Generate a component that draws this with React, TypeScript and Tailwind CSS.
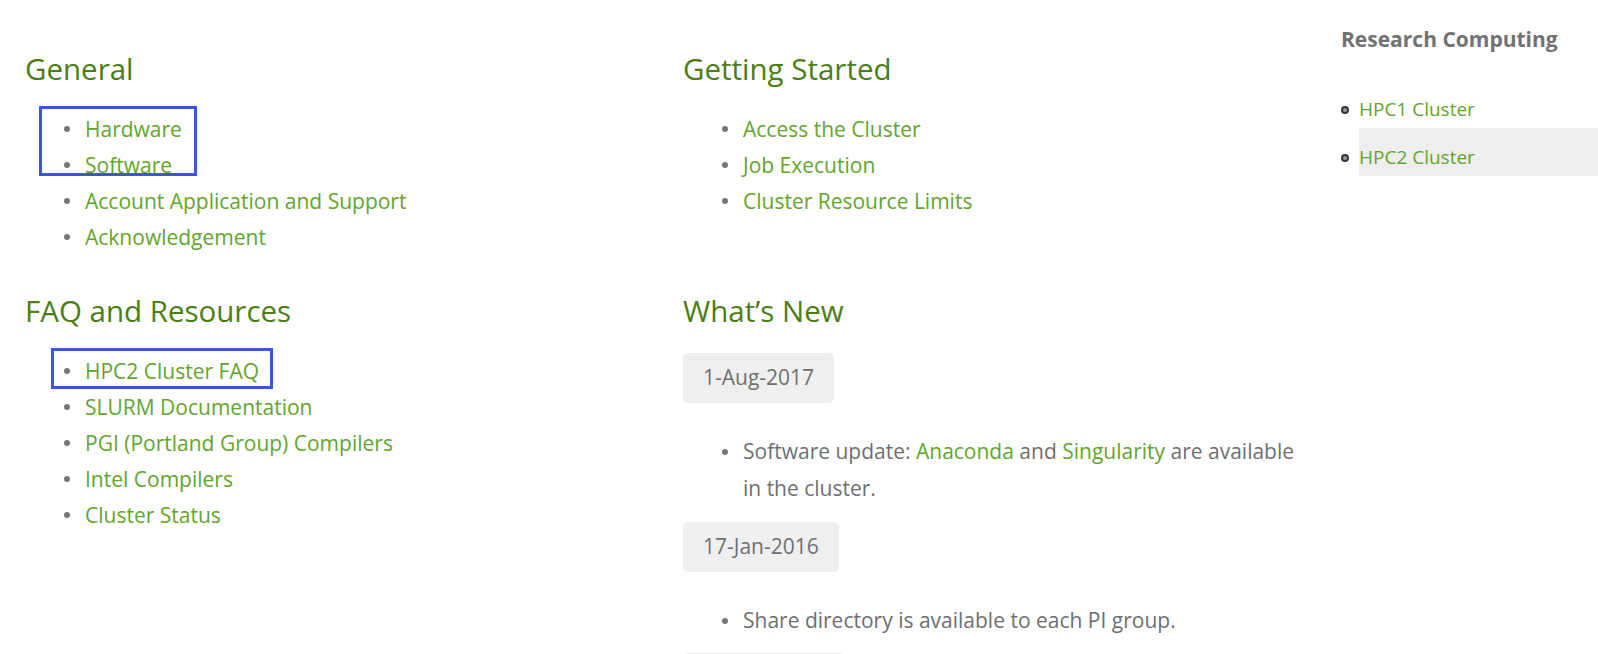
import React from 'react'

const general = ['Hardware', 'Software', 'Account Application and Support', 'Acknowledgement']
const gettingStarted = ['Access the Cluster', 'Job Execution', 'Cluster Resource Limits']
const faq = ['HPC2 Cluster FAQ', 'SLURM Documentation', 'PGI (Portland Group) Compilers', 'Intel Compilers', 'Cluster Status']

const Dot = () => <span className="block w-[6px] h-[6px] rounded-full bg-[#777] shrink-0" />

const LinkList = ({ items }: { items: string[] }) => (
    <ul className="text-[21px] leading-[36px]">
        {items.map((item) => (
            <li key={item} className="flex items-center gap-[15px] pl-[39px]">
                <Dot />
                <a className="text-[#62a52a]">{item}</a>
            </li>
        ))}
    </ul>
)

const Heading = ({ children }: { children: React.ReactNode }) => (
    <h2 className="text-[29.5px] leading-[33px] text-[#4b7d15] mb-[26px]">{children}</h2>
)

const DateBadge = ({ date }: { date: string }) => (
    <div className="inline-flex items-center h-[50px] px-[20px] rounded-[5px] bg-[#efefef] text-[21px] text-[#6f6f6f]">{date}</div>
)

export default function App() {
    return (
        <div className="relative flex bg-white min-h-screen overflow-hidden" style={{ fontFamily: '"Open Sans", "Noto Sans", sans-serif' }}>
            <main className="grid grid-cols-[658px_627px] pl-[25px] pt-[52px] shrink-0">
                <section>
                    <Heading>General</Heading>
                    <LinkList items={general} />
                </section>
                <section>
                    <Heading>Getting Started</Heading>
                    <LinkList items={gettingStarted} />
                </section>
                <section className="mt-[39px]">
                    <Heading>FAQ and Resources</Heading>
                    <LinkList items={faq} />
                </section>
                <section className="mt-[39px]">
                    <Heading>What’s New</Heading>
                    <DateBadge date="1-Aug-2017" />
                    <ul className="text-[21px] leading-[37px] text-[#6f6f6f] mt-[30px] mb-[15px]">
                        <li className="flex gap-[15px] pl-[39px]">
                            <div className="pt-[16px]"><Dot /></div>
                            <span>
                                Software update: <a className="text-[#62a52a]">Anaconda</a> and <a className="text-[#62a52a]">Singularity</a> are available in the cluster.
                            </span>
                        </li>
                    </ul>
                    <DateBadge date="17-Jan-2016" />
                    <ul className="text-[21px] leading-[37px] text-[#6f6f6f] mt-[30px] mb-[14px]">
                        <li className="flex items-center gap-[15px] pl-[39px]">
                            <Dot />
                            <span>Share directory is available to each PI group.</span>
                        </li>
                    </ul>
                    <DateBadge date="12-Dec-2015" />
                </section>
            </main>

            <aside className="flex-1 pl-[31px] pt-[24px]">
                <h3 className="text-[21px] leading-[30px] font-bold text-[#727272]">Research Computing</h3>
                <ul className="mt-[26px] text-[19px]">
                    {['HPC1 Cluster', 'HPC2 Cluster'].map((item, index) => (
                        <li key={item} className="flex items-center">
                            <span className="block w-[8px] h-[8px] rounded-full border-[2px] border-[#333] bg-[#999] shrink-0 mr-[10px] mt-[12px]" />
                            <div className={`flex-1 h-[48px] pt-[16px] leading-[26px] ${index === 1 ? 'bg-[#eeeeee]' : ''}`}>
                                <a className="text-[#62a52a] block">{item}</a>
                            </div>
                        </li>
                    ))}
                </ul>
            </aside>

            {/* annotation boxes */}
            <div className="absolute left-[39px] top-[106px] w-[158px] h-[70px] border-[3px] border-[#3b57d8]" />
            <div className="absolute left-[51px] top-[348px] w-[222px] h-[41px] border-[3px] border-[#3b57d8]" />
        </div>
    )
}
